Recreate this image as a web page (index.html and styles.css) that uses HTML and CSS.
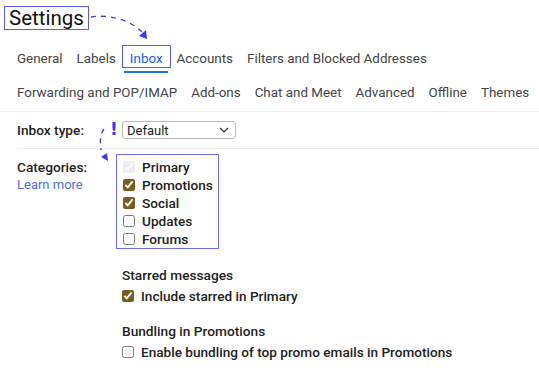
FILE: index.html
```html
<!DOCTYPE html>
<html lang="en">
<head>
  <meta charset="UTF-8">
  <meta name="viewport" content="width=device-width, initial-scale=1.0">
  <title>Settings</title>
  <link rel="stylesheet" href="styles.css">
</head>
<body>
  <div class="page">
    <div class="title-row">
      <h1 class="title">Settings</h1>
    </div>

    <nav class="tabs">
      <div class="tab-row">
        <span class="tab">General</span>
        <span class="tab">Labels</span>
        <span class="tab active">Inbox</span>
        <span class="tab">Accounts</span>
        <span class="tab">Filters and Blocked Addresses</span>
      </div>
      <div class="tab-row">
        <span class="tab">Forwarding and POP/IMAP</span>
        <span class="tab">Add-ons</span>
        <span class="tab">Chat and Meet</span>
        <span class="tab">Advanced</span>
        <span class="tab">Offline</span>
        <span class="tab">Themes</span>
      </div>
    </nav>

    <div class="setting inbox-type">
      <div class="setting-label">Inbox type:</div>
      <div class="setting-body">
        <div class="select">
          <span>Default</span>
          <svg width="10" height="6" viewBox="0 0 10 6"><path d="M1 1l4 4 4-4" fill="none" stroke="#333" stroke-width="1.2"/></svg>
        </div>
      </div>
    </div>

    <div class="setting categories">
      <div class="setting-label">
        <div>Categories:</div>
        <a class="link" href="#">Learn more</a>
      </div>
      <div class="setting-body">
        <div class="category-box">
          <label class="check disabled"><input type="checkbox" checked disabled> Primary</label>
          <label class="check"><input type="checkbox" checked> Promotions</label>
          <label class="check"><input type="checkbox" checked> Social</label>
          <label class="check"><input type="checkbox"> Updates</label>
          <label class="check"><input type="checkbox"> Forums</label>
        </div>

        <div class="group">
          <div class="group-title">Starred messages</div>
          <label class="check"><input type="checkbox" checked> Include starred in Primary</label>
        </div>

        <div class="group">
          <div class="group-title">Bundling in Promotions</div>
          <label class="check"><input type="checkbox"> Enable bundling of top promo emails in Promotions</label>
        </div>
      </div>
    </div>
  </div>

  <!-- annotation marks drawn over the page -->
  <svg class="notes" width="539" height="373" viewBox="0 0 539 373">
    <path d="M91 17 C110 14 130 20 142 32" fill="none" stroke="#3a3af0" stroke-width="1.3" stroke-dasharray="5 5"/>
    <path d="M139 36 L147 39 L146 30 Z" fill="#3a3af0"/>
    <text x="110" y="135" class="bang">!</text>
    <path d="M104 129 C100 134 100 142 101 150" fill="none" stroke="#3a3af0" stroke-width="1.3" stroke-dasharray="5 5"/>
    <path d="M101 157 L108 161 L107 153 Z" fill="#3a3af0"/>
  </svg>
</body>
</html>
```

FILE: styles.css
```css
body {
  font-family: Roboto, "Noto Sans", sans-serif;
  margin: 0;
  background-color: #fff;
  color: #222;
}

.page {
  width: 539px;
  height: 373px;
  overflow: hidden;
}

.title-row {
  padding: 6px 0 0 4px;
}

.title {
  display: inline-block;
  margin: 0;
  padding: 0 4px 0 4px;
  font-size: 20.5px;
  font-weight: 400;
  line-height: 22px;
  color: #111;
  border: 1px solid #5a5cf0;
}

.tabs {
  padding: 16px 0 0 10px;
}

.tab-row {
  display: flex;
  height: 34px;
}

.tab-row + .tab-row {
  height: 31px;
}

.tab {
  position: relative;
  padding: 4px 7px 0;
  height: 17px;
  font-size: 13.4px;
  line-height: 17px;
  color: #444;
  white-space: nowrap;
}

.tab.active {
  color: #1a5ee8;
  box-shadow: 0 0 0 1px #5a5cf0;
  height: 16px;
  padding-bottom: 1px;
}

.tab.active::after {
  content: "";
  position: absolute;
  left: 1px;
  right: 2px;
  bottom: -6px;
  height: 2px;
  background-color: #1a73e8;
}

.setting {
  display: flex;
}

.setting-label {
  width: 105px;
  padding-left: 17px;
  font-size: 13.7px;
  font-weight: 500;
  color: #222;
}

.setting-body {
  flex: 1;
}

.inbox-type {
  border-top: 1px solid #ececec;
  height: 36px;
  align-items: center;
  position: relative;
}

.inbox-type::after {
  content: "";
  position: absolute;
  left: 17px;
  right: 0;
  bottom: -1px;
  height: 1px;
  background-color: #ececec;
}

.select {
  display: flex;
  align-items: center;
  justify-content: space-between;
  width: 102px;
  height: 16px;
  padding: 0 6px 0 4px;
  border: 1px solid #b8b8b8;
  border-radius: 3px;
  font-size: 13px;
  font-weight: 400;
  color: #222;
}

.categories {
  padding-top: 10px;
}

.categories .setting-label {
  line-height: 18px;
}

.link {
  display: block;
  font-size: 13px;
  font-weight: 400;
  color: #4a6fd8;
  text-decoration: none;
}

.category-box {
  display: inline-flex;
  flex-direction: column;
  margin: -4px 0 0 -6px;
  padding: 3px 5px 0 6px;
  border: 1px solid #6a6cf0;
}

.check {
  display: flex;
  align-items: center;
  height: 18px;
  font-size: 13.6px;
  font-weight: 500;
  color: #222;
}

.check input {
  width: 12px;
  height: 12px;
  margin: 0 7px 0 0;
  accent-color: #7a5b22;
}

.check.disabled input {
  opacity: 0.35;
}

.group {
  padding-top: 17px;
}

.group-title {
  height: 18px;
  line-height: 18px;
  font-size: 13.7px;
  font-weight: 500;
  color: #222;
  margin-bottom: 3px;
}

.notes {
  position: absolute;
  left: 0;
  top: 0;
  pointer-events: none;
}

.bang {
  font-family: "DejaVu Sans", sans-serif;
  font-size: 17px;
  font-weight: 700;
  fill: #3a3af0;
}
```
